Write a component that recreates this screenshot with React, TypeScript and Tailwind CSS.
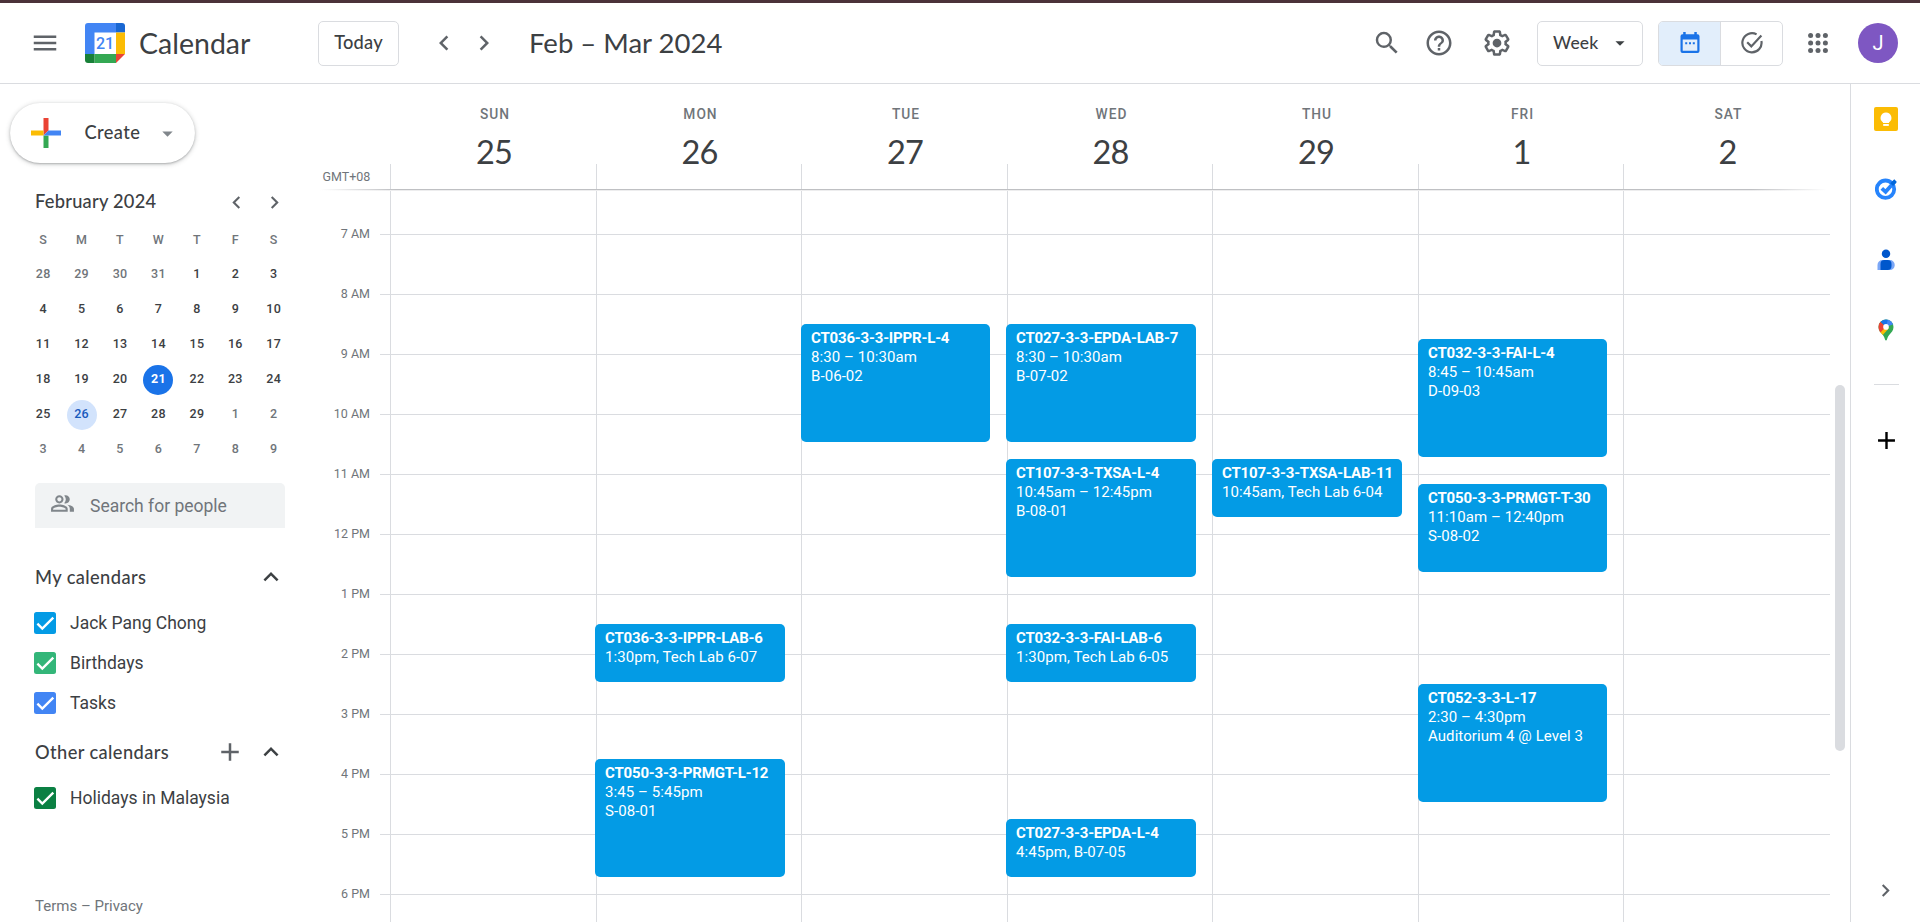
import React from "react";
import {
  MdAdd,
  MdArrowDropDown,
  MdChevronLeft,
  MdChevronRight,
  MdExpandLess,
  MdHelpOutline,
  MdMenu,
  MdOutlinePeopleAlt,
  MdSearch,
} from "react-icons/md";

type CalendarEvent = { title: string; lines: string[]; start: number; end: number };
type Day = { name: string; date: number; width: string; inset: string; events: CalendarEvent[] };

const HOUR = 60;
const FIRST_HOUR = 7;
const FIRST_LINE = 43;

const ev = (title: string, start: number, end: number, ...lines: string[]): CalendarEvent => ({
  title,
  lines,
  start,
  end,
});

const days: Day[] = [
  { name: "SUN", date: 25, width: "w-[206px]", inset: "-left-px w-[189px]", events: [] },
  {
    name: "MON",
    date: 26,
    width: "w-[205px]",
    inset: "-left-[2px] w-[190px]",
    events: [
      ev("CT036-3-3-IPPR-LAB-6", 13.5, 14.5, "1:30pm, Tech Lab 6-07"),
      ev("CT050-3-3-PRMGT-L-12", 15.75, 17.75, "3:45 – 5:45pm", "S-08-01"),
    ],
  },
  {
    name: "TUE",
    date: 27,
    width: "w-[206px]",
    inset: "-left-px w-[189px]",
    events: [ev("CT036-3-3-IPPR-L-4", 8.5, 10.5, "8:30 – 10:30am", "B-06-02")],
  },
  {
    name: "WED",
    date: 28,
    width: "w-[205px]",
    inset: "-left-[2px] w-[190px]",
    events: [
      ev("CT027-3-3-EPDA-LAB-7", 8.5, 10.5, "8:30 – 10:30am", "B-07-02"),
      ev("CT107-3-3-TXSA-L-4", 10.75, 12.75, "10:45am – 12:45pm", "B-08-01"),
      ev("CT032-3-3-FAI-LAB-6", 13.5, 14.5, "1:30pm, Tech Lab 6-05"),
      ev("CT027-3-3-EPDA-L-4", 16.75, 17.75, "4:45pm, B-07-05"),
    ],
  },
  {
    name: "THU",
    date: 29,
    width: "w-[206px]",
    inset: "-left-px w-[190px]",
    events: [ev("CT107-3-3-TXSA-LAB-11", 10.75, 11.75, "10:45am, Tech Lab 6-04")],
  },
  {
    name: "FRI",
    date: 1,
    width: "w-[205px]",
    inset: "-left-px w-[189px]",
    events: [
      ev("CT032-3-3-FAI-L-4", 8.75, 10.75, "8:45 – 10:45am", "D-09-03"),
      ev("CT050-3-3-PRMGT-T-30", 11 + 1 / 6, 12 + 2 / 3, "11:10am – 12:40pm", "S-08-02"),
      ev("CT052-3-3-L-17", 14.5, 16.5, "2:30 – 4:30pm", "Auditorium 4 @ Level 3"),
    ],
  },
  { name: "SAT", date: 2, width: "w-[207px]", inset: "-left-px w-[189px]", events: [] },
];

const hours = ["7 AM", "8 AM", "9 AM", "10 AM", "11 AM", "12 PM", "1 PM", "2 PM", "3 PM", "4 PM", "5 PM", "6 PM"];

const monthRows = [
  [28, 29, 30, 31, 1, 2, 3],
  [4, 5, 6, 7, 8, 9, 10],
  [11, 12, 13, 14, 15, 16, 17],
  [18, 19, 20, 21, 22, 23, 24],
  [25, 26, 27, 28, 29, 1, 2],
  [3, 4, 5, 6, 7, 8, 9],
];

function CalendarLogo() {
  return (
    <svg width="40" height="40" viewBox="0 0 40 40">
      <path d="M3 0H31V9.5H9.5V31H0V3A3 3 0 0 1 3 0Z" fill="#4285f4" />
      <path d="M31 0H37A3 3 0 0 1 40 3V9.5H31Z" fill="#1967d2" />
      <path d="M31 9.5H40V31H31Z" fill="#fbbc04" />
      <path d="M9.5 31H31V40H9.5Z" fill="#34a853" />
      <path d="M0 31H9.5V40H3A3 3 0 0 1 0 37Z" fill="#188038" />
      <path d="M31 31H40L31 40Z" fill="#ea4335" />
      <text x="20" y="25.7" textAnchor="middle" fill="#4285f4" fontSize="16" fontFamily="Roboto, sans-serif" fontWeight="500">
        21
      </text>
    </svg>
  );
}

function SettingsIcon() {
  return (
    <svg width="30" height="30" viewBox="0 0 24 24" fill="#5f6368">
      <path d="M13.85 22.25h-3.7c-.74 0-1.36-.54-1.45-1.27l-.27-1.89c-.27-.14-.53-.29-.79-.46l-1.8.72c-.7.26-1.47-.03-1.81-.65L2.2 15.53c-.35-.66-.2-1.44.36-1.88l1.53-1.19c-.01-.15-.02-.3-.02-.46 0-.15.01-.31.02-.46l-1.52-1.19c-.59-.45-.74-1.26-.37-1.88l1.85-3.19c.34-.62 1.11-.9 1.79-.63l1.81.73c.26-.17.52-.32.78-.46l.27-1.91c.09-.7.71-1.25 1.44-1.25h3.7c.74 0 1.36.54 1.45 1.27l.27 1.89c.27.14.53.29.79.46l1.8-.72c.71-.26 1.48.03 1.82.65l1.84 3.18c.36.66.2 1.44-.36 1.88l-1.52 1.19c.01.15.02.3.02.46s-.01.31-.02.46l1.52 1.19c.56.45.72 1.23.37 1.86l-1.86 3.22c-.34.62-1.11.9-1.8.63l-1.8-.72c-.26.17-.52.32-.78.46l-.27 1.91c-.1.68-.72 1.22-1.46 1.22zm-3.23-2h2.76l.37-2.55.53-.22c.44-.18.88-.44 1.34-.78l.45-.34 2.38.96 1.38-2.4-2.03-1.58.07-.56c.03-.26.06-.51.06-.78s-.03-.53-.06-.78l-.07-.56 2.03-1.58-1.39-2.4-2.39.96-.45-.35c-.42-.32-.87-.58-1.33-.77l-.52-.22-.37-2.55h-2.76l-.37 2.55-.53.21c-.44.19-.88.44-1.34.79l-.45.33-2.38-.95-1.39 2.39 2.03 1.58-.07.56a7 7 0 0 0-.06.79c0 .26.02.53.06.78l.07.56-2.03 1.58 1.38 2.4 2.39-.96.45.35c.43.33.86.58 1.33.77l.53.22.38 2.55z" />
      <circle cx="12" cy="12" r="3.5" />
    </svg>
  );
}

function WeekViewIcon() {
  return (
    <svg width="20" height="22" viewBox="0 0 20 22" fill="#1a73e8">
      <path
        fillRule="evenodd"
        d="M3.2 0H5.7V2.2H14.3V0H16.8V2.2H17.5A2 2 0 0 1 19.5 4.2V19A2 2 0 0 1 17.5 21H2.5A2 2 0 0 1 .5 19V4.2A2 2 0 0 1 2.5 2.2H3.2ZM2.7 7.6V18.8H17.3V7.6Z"
      />
      <path d="M5.2 10.2H7.2V12.2H5.2ZM9 10.2H11V12.2H9ZM12.8 10.2H14.8V12.2H12.8Z" />
    </svg>
  );
}

function TasksViewIcon() {
  return (
    <svg width="24" height="24" viewBox="0 0 24 24" fill="none" stroke="#5f6368" strokeWidth="2.2">
      <path d="M16.6 3.4A9.6 9.6 0 1 0 21.4 10" />
      <path d="M7.2 11.3 11.3 15.4 21.4 4.6" />
    </svg>
  );
}

function AppsIcon() {
  const at = [2.6, 10, 17.4];
  return (
    <svg width="20" height="20" viewBox="0 0 20 20" fill="#5f6368">
      {at.map((y) => at.map((x) => <circle key={x + "-" + y} cx={x} cy={y} r="2.5" />))}
    </svg>
  );
}

function CreateIcon() {
  return (
    <svg width="30" height="30" viewBox="0 0 30 30">
      <path d="M12.5 0H17.5V12.5L12.5 17.5Z" fill="#ea4335" />
      <path d="M0 12.5H12.5V17.5H0Z" fill="#fbbc04" />
      <path d="M12.5 17.5H17.5V30H12.5Z" fill="#34a853" />
      <path d="M17.5 12.5H30V17.5H12.5Z" fill="#4285f4" />
    </svg>
  );
}

function KeepIcon() {
  return (
    <svg width="24" height="24" viewBox="0 0 24 24">
      <rect width="24" height="24" rx="2" fill="#fbbc04" />
      <path d="M12 5.5a5.4 5.4 0 0 0-3 9.9V16h6v-.6a5.4 5.4 0 0 0-3-9.9Z" fill="#fff" />
      <rect x="9.2" y="17" width="5.6" height="1.9" fill="#fff" />
    </svg>
  );
}

function TasksIcon() {
  return (
    <svg width="22" height="22" viewBox="0 0 22 22" fill="none">
      <circle cx="10.5" cy="11.2" r="8.7" stroke="#2684fc" strokeWidth="3.8" />
      <path d="M6.8 10.3 10.6 13.8 19.4 4" stroke="#2684fc" strokeWidth="3.8" />
      <path d="M15.2 5.2 19.3 1.2 21.9 3.9 18 8Z" fill="#0066da" />
    </svg>
  );
}

function ContactsIcon() {
  return (
    <svg width="18" height="22" viewBox="0 0 18 22">
      <circle cx="9" cy="4.8" r="4.2" fill="#0057cc" />
      <path d="M.5 21V16A5 5 0 0 1 5.5 11H13A4.7 4.7 0 0 1 17.7 15.7V16.5A4.7 4.7 0 0 1 13 21Z" fill="#7ba7f7" />
      <path d="M3.5 21V15A4 4 0 0 1 7.5 11H10.5A4 4 0 0 1 14.5 15V17A4 4 0 0 1 10.5 21Z" fill="#0057cc" />
    </svg>
  );
}

function MapsIcon() {
  return (
    <svg width="16" height="22" viewBox="0 0 16 22">
      <defs>
        <clipPath id="pin">
          <path d="M8 .4A7.5 7.5 0 0 0 .5 7.9C.5 11.3 2.4 13.1 4.4 15.4 5.9 17.2 6.6 18.8 7.1 20.8 7.3 21.8 8.7 21.8 8.9 20.8 9.4 18.8 10.1 17.2 11.6 15.4 13.6 13.1 15.5 11.3 15.5 7.9A7.5 7.5 0 0 0 8 .4Z" />
        </clipPath>
      </defs>
      <g clipPath="url(#pin)">
        <path d="M0 0H16V22H0Z" fill="#34a853" />
        <path d="M0 14 8 5 11 9 3.5 17.5H0Z" fill="#fbbc04" />
        <path d="M0 0 2.5 2.7 8 7.5 2 14H0Z" fill="#ea4335" />
        <path d="M2.5 2.7 6 0H11L8 7.9Z" fill="#1a73e8" />
        <path d="M10 0H16V5L8 8Z" fill="#4285f4" />
      </g>
      <circle cx="8" cy="7.9" r="2.8" fill="#fff" />
    </svg>
  );
}

function CheckRow({ color, label }: { color: string; label: string }) {
  return (
    <div className="flex h-10 items-center gap-[14px] pl-[34px]">
      <svg width="22" height="22" viewBox="0 0 22 22" className={color}>
        <rect width="22" height="22" rx="2.5" fill="currentColor" />
        <path d="M3.4 11.7 8.3 16.5 19.3 5.7" fill="none" stroke="#fff" strokeWidth="2.4" />
      </svg>
      <span className="text-[17.5px] text-[#3c4043]">{label}</span>
    </div>
  );
}

function Header() {
  return (
    <header className="flex h-[81px] shrink-0 items-center border-b border-[#dadce0] pl-[30px] text-[#5f6368]">
      <MdMenu size={30} />
      <div className="ml-[25px]">
        <CalendarLogo />
      </div>
      <span className="ml-[14px] w-[179px] font-[Lato,sans-serif] text-[28.5px] text-[#3c4043]">Calendar</span>
      <button className="flex h-[45px] w-[81px] items-center justify-center rounded-[5px] border border-[#dadce0] font-[Lato,sans-serif] text-[18.25px] font-medium tracking-[0.2px] text-[#3c4043]">
        Today
      </button>
      <MdChevronLeft size={30} className="ml-[30px]" />
      <MdChevronRight size={30} className="ml-[10px]" />
      <h1 className="ml-[30px] font-[Lato,sans-serif] text-[27.5px] whitespace-nowrap text-[#3c4043]">Feb – Mar 2024</h1>
      <div className="mr-[22px] ml-auto flex items-center">
        <MdSearch size={30} />
        <MdHelpOutline size={30} className="ml-[22px]" />
        <div className="ml-7">
          <SettingsIcon />
        </div>
        <button className="ml-[25px] flex h-[45px] w-[106px] items-center rounded-[5px] border border-[#dadce0] pl-[15px] font-[Lato,sans-serif] text-[17.5px] font-medium tracking-[0.2px] text-[#3c4043]">
          Week
          <MdArrowDropDown size={22} className="ml-[10px]" />
        </button>
        <div className="ml-[15px] flex h-[45px] w-[125px] overflow-hidden rounded-[5px] border border-[#dadce0]">
          <div className="flex w-[62px] items-center justify-center border-r border-[#dadce0] bg-[#e2eefb]">
            <WeekViewIcon />
          </div>
          <div className="flex flex-1 items-center justify-center">
            <TasksViewIcon />
          </div>
        </div>
        <div className="ml-[25px]">
          <AppsIcon />
        </div>
        <div className="ml-[30px] flex size-10 items-center justify-center rounded-full bg-[#7e57c2] text-[20px] text-white">
          J
        </div>
      </div>
    </header>
  );
}

function MiniMonth() {
  return (
    <section>
      <div className="flex h-[30px] items-center pl-[35px] text-[#5f6368]">
        <span className="w-[189px] font-[Lato,sans-serif] text-[18.25px] font-medium tracking-[0.25px] text-[#3c4043]">
          February 2024
        </span>
        <MdChevronLeft size={25} />
        <MdChevronRight size={25} className="ml-[13px]" />
      </div>
      <div className="mt-[7px] ml-6 grid w-[269px] grid-cols-7 text-center text-[12.5px] font-medium tracking-[0.3px]">
        {["S", "M", "T", "W", "T", "F", "S"].map((letter, i) => (
          <span key={i} className="flex h-[33px] items-center justify-center text-[#70757a]">
            {letter}
          </span>
        ))}
        {monthRows.flatMap((row, r) =>
          row.map((date, c) => {
            const outside = (r === 0 && date > 20) || (r > 3 && date < 20);
            const today = r === 3 && date === 21;
            const selected = r === 4 && date === 26;
            const tone = today
              ? "bg-[#1a73e8] text-white font-bold"
              : selected
                ? "bg-[#d2e3fc] text-[#185abc]"
                : outside
                  ? "text-[#70757a]"
                  : "text-[#3c4043]";
            return (
              <span key={r + "-" + c} className="flex h-[35px] items-center justify-center">
                <span className={"flex size-[30px] items-center justify-center rounded-full " + tone}>{date}</span>
              </span>
            );
          }),
        )}
      </div>
    </section>
  );
}

function Sidebar() {
  return (
    <aside className="flex w-[320px] shrink-0 flex-col">
      <button className="mt-[19px] ml-[10px] flex h-[60px] w-[185px] items-center rounded-full pl-[20.5px] shadow-[0_1px_2px_rgba(60,64,67,0.3),0_1px_4px_1px_rgba(60,64,67,0.18)]">
        <CreateIcon />
        <span className="ml-6 w-[70px] text-left font-[Lato,sans-serif] text-[18.25px] font-medium tracking-[0.4px] text-[#3c4043]">
          Create
        </span>
        <MdArrowDropDown size={25} className="text-[#80868b]" />
      </button>
      <div className="mt-6">
        <MiniMonth />
      </div>
      <div className="mt-4 ml-[35px] flex h-[45px] w-[250px] items-center rounded-t-[5px] bg-[#f1f3f4] pl-[15px] text-[#80868b]">
        <MdOutlinePeopleAlt size={25} className="-mt-[5px]" />
        <span className="ml-[15px] pt-px text-[17.5px] text-[#70757a]">Search for people</span>
      </div>
      <div className="mt-[29px] flex h-10 items-center pl-[35px] text-[#3c4043]">
        <span className="w-[221px] pt-px font-[Lato,sans-serif] text-[18.25px] font-medium tracking-[0.4px]">My calendars</span>
        <MdExpandLess size={30} />
      </div>
      <div className="mt-[6px]">
        <CheckRow color="text-[#039be5]" label="Jack Pang Chong" />
        <CheckRow color="text-[#33b679]" label="Birthdays" />
        <CheckRow color="text-[#4285f4]" label="Tasks" />
      </div>
      <div className="mt-[9px] flex h-10 items-center pl-[35px] text-[#3c4043]">
        <span className="w-[180px] pt-px font-[Lato,sans-serif] text-[18.25px] font-medium tracking-[0.4px]">Other calendars</span>
        <MdAdd size={30} className="text-[#5f6368]" />
        <MdExpandLess size={30} className="ml-[11px]" />
      </div>
      <div className="mt-[6px]">
        <CheckRow color="text-[#0b8043]" label="Holidays in Malaysia" />
      </div>
      <div className="mt-auto mb-[5px] pl-[35px] text-[15px] text-[#70757a]">Terms – Privacy</div>
    </aside>
  );
}

function EventCard({ event, inset }: { event: CalendarEvent; inset: string }) {
  const top = (event.start - FIRST_HOUR) * HOUR + FIRST_LINE;
  const height = (event.end - event.start) * HOUR - 2;
  return (
    <div
      className={
        "absolute rounded-[5px] bg-[#039be5] px-[10px] pt-[5px] text-[15px] leading-[19px] tracking-[0.07px] whitespace-nowrap text-white " +
        inset
      }
      style={{ top, height }}
    >
      <div className="font-bold tracking-[-0.18px]">{event.title}</div>
      {event.lines.map((line) => (
        <div key={line}>{line}</div>
      ))}
    </div>
  );
}

function WeekGrid() {
  return (
    <main className="flex w-[1530px] shrink-0 flex-col">
      <div className="flex h-[105px]">
        <div className="flex w-[70px] items-end pb-[2px] pl-[2.5px] text-[12.5px] text-[#70757a]">GMT+08</div>
        {days.map((day) => (
          <div key={day.name} className={"flex shrink-0 flex-col items-center " + day.width}>
            <div className="mt-5 pl-1 text-[13.75px] leading-5 font-medium tracking-[1px] text-[#70757a]">{day.name}</div>
            <div className="mt-[-2px] flex h-[37px] items-center pt-6 pl-0.5 font-[Lato,sans-serif] text-[32.5px] tracking-[-0.8px] text-[#3c4043]">
              {day.date}
            </div>
            <div className="mt-auto h-[25px] w-full border-l border-[#dadce0]" />
          </div>
        ))}
      </div>
      <div className="flex h-[2px] shrink-0 flex-col">
        <div className="h-px w-[1507px] bg-[linear-gradient(to_right,transparent,#bfc0c3_5%,#bfc0c3_95%,transparent)]" />
        <div className="h-px w-[1507px] bg-[linear-gradient(to_right,transparent,#ededee_5%,#ededee_95%,transparent)]" />
      </div>
      <div className="flex min-h-0 flex-1 overflow-hidden">
        <div className="w-[50px] shrink-0 pt-[13.5px]">
          {hours.map((hour) => (
            <div key={hour} className="flex h-[60px] items-center justify-end text-[12.5px] text-[#70757a]">
              {hour}
            </div>
          ))}
        </div>
        <div className="ml-[10px] grid h-[731px] w-[1450px]">
          <div className="col-start-1 row-start-1">
            <div className="h-[44px] border-b border-[#dadce0]" />
            {hours.slice(1).map((hour) => (
              <div key={hour} className="h-[60px] border-b border-[#dadce0]" />
            ))}
          </div>
          <div className="col-start-1 row-start-1 flex pl-[10px]">
            {days.map((day) => (
              <div key={day.name} className={"relative shrink-0 border-l border-[#dadce0] " + day.width}>
                {day.events.map((event) => (
                  <EventCard key={event.title} event={event} inset={day.inset} />
                ))}
              </div>
            ))}
          </div>
        </div>
        <div className="mt-[194px] ml-[5px] h-[366px] w-[10px] rounded-full bg-[#dadce0]" />
      </div>
    </main>
  );
}

function SidePanel() {
  return (
    <aside className="flex flex-1 flex-col items-center border-l border-[#dadce0] pt-[11px] pl-px">
      <div className="flex h-[70px] flex-col pt-3">
        <KeepIcon />
      </div>
      <div className="flex h-[70px] flex-col pt-[13px]">
        <TasksIcon />
      </div>
      <div className="flex h-[70px] flex-col pt-[14px]">
        <ContactsIcon />
      </div>
      <div className="flex h-[79px] flex-col pt-[14px]">
        <MapsIcon />
      </div>
      <div className="h-px w-[25px] bg-[#dadce0]" />
      <MdAdd size={29} className="mt-[41px] text-black" />
      <MdChevronRight size={25} className="mt-auto mr-0.5 mb-[19px] text-[#5f6368]" />
    </aside>
  );
}

export default function App() {
  return (
    <div className="flex h-[922px] w-[1920px] flex-col overflow-hidden border-t-[3px] border-[#4b323a] bg-white font-[Roboto,sans-serif]">
      <Header />
      <div className="flex min-h-0 flex-1">
        <Sidebar />
        <WeekGrid />
        <SidePanel />
      </div>
    </div>
  );
}
